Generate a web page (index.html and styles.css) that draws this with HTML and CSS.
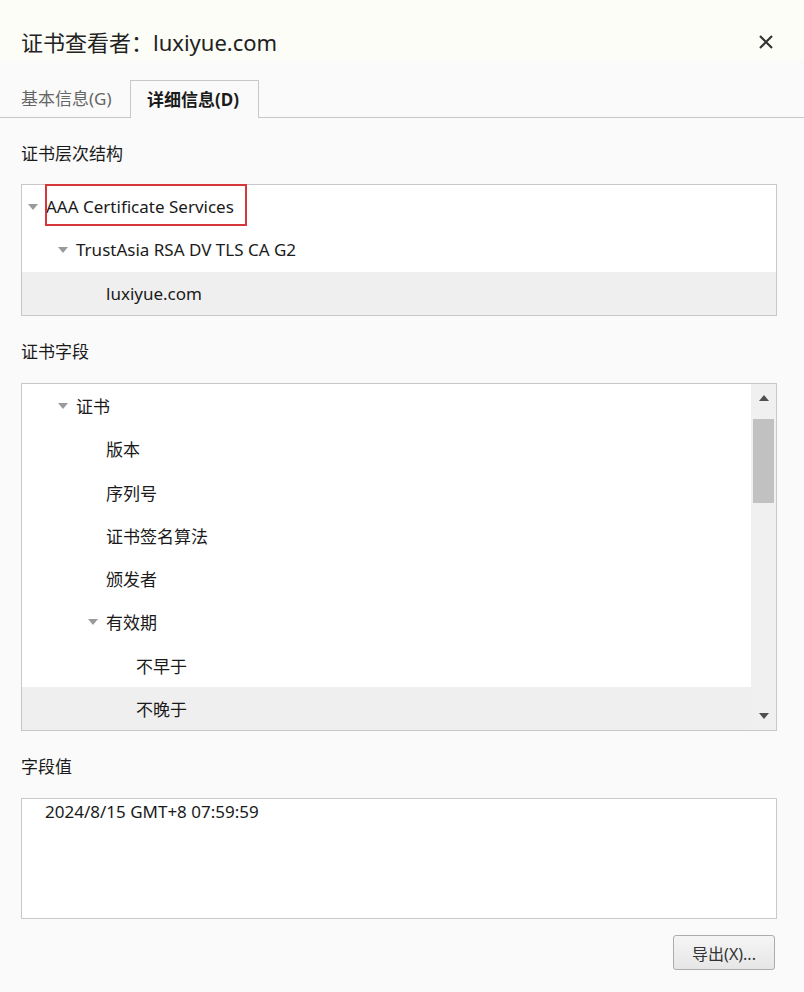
FILE: index.html
```html
<!DOCTYPE html>
<html lang="zh-CN">
<head>
<meta charset="utf-8">
<title>证书查看者</title>
<link rel="stylesheet" href="styles.css">
</head>
<body>
<div class="dialog">
  <header class="header">
    <h1 class="title">证书查看者：luxiyue.com</h1>
    <button class="close" aria-label="关闭">
      <svg width="16" height="16" viewBox="0 0 16 16"><path d="M2 2 L14 14 M14 2 L2 14" stroke="#333" stroke-width="2.2" fill="none"/></svg>
    </button>
  </header>

  <nav class="tabs">
    <div class="tab">基本信息(G)</div>
    <div class="tab active">详细信息(D)</div>
  </nav>

  <div class="content">
    <div class="label">证书层次结构</div>
    <div class="box tree-box">
      <div class="row lvl0"><span class="tri"></span><span class="mark">AAA Certificate Services</span></div>
      <div class="row lvl1"><span class="tri"></span><span>TrustAsia RSA DV TLS CA G2</span></div>
      <div class="row lvl2 selected"><span>luxiyue.com</span></div>
    </div>

    <div class="label label-fields">证书字段</div>
    <div class="box fields-box">
      <div class="fields">
        <div class="frow lvl1"><span class="tri"></span><span>证书</span></div>
        <div class="frow lvl2"><span>版本</span></div>
        <div class="frow lvl2"><span>序列号</span></div>
        <div class="frow lvl2"><span>证书签名算法</span></div>
        <div class="frow lvl2"><span>颁发者</span></div>
        <div class="frow lvl2 has-tri"><span class="tri"></span><span>有效期</span></div>
        <div class="frow lvl3"><span>不早于</span></div>
        <div class="frow lvl3 selected"><span>不晚于</span></div>
      </div>
      <div class="scrollbar">
        <div class="sb-btn"><span class="arrow-up"></span></div>
        <div class="sb-track"><div class="sb-thumb"></div></div>
        <div class="sb-btn"><span class="arrow-down"></span></div>
      </div>
    </div>

    <div class="label label-value">字段值</div>
    <div class="box value-box">2024/8/15 GMT+8 07:59:59</div>

    <div class="actions">
      <button class="btn">导出(X)...</button>
    </div>
  </div>
</div>
</body>
</html>
```

FILE: styles.css
```css
* { box-sizing: border-box; }
html, body { margin: 0; padding: 0; }
body {
  background: #fafafa;
  font-family: "Noto Sans", "Noto Sans CJK SC", sans-serif;
  color: #1a1a1a;
  width: 804px;
  height: 992px;
  overflow: hidden;
}
.dialog { width: 804px; }

.header {
  height: 60px;
  background: #fcfdf6;
  display: flex;
  align-items: flex-start;
  justify-content: space-between;
  padding: 27px 30px 0 21px;
}
.title {
  margin: 0;
  font-weight: 400;
  font-size: 22px;
  line-height: 30px;
  color: #222;
}
.close {
  border: 0;
  background: transparent;
  padding: 0;
  margin-top: 7px;
  width: 16px;
  height: 16px;
  display: block;
}
.close svg { display: block; }

.tabs {
  margin-top: 20px;
  height: 38px;
  display: flex;
  align-items: stretch;
  border-bottom: 1px solid #c8c8c8;
  padding-left: 21px;
}
.tab {
  font-size: 17px;
  line-height: 37px;
  color: #666;
  width: 109px;
}
.tab.active {
  color: #1a1a1a;
  font-weight: 700;
  border: 1px solid #c8c8c8;
  border-bottom: 0;
  background: #fafafa;
  margin-bottom: -1px;
  padding: 0 0 0 16px;
  width: 129px;
  line-height: 38px;
}

.content { padding: 0 27px 0 21px; }

.label {
  font-size: 17px;
  line-height: 28px;
  margin-top: 22px;
  margin-bottom: 16px;
}
.label-fields { margin-bottom: 17px; }
.label-value { margin-top: 22px; margin-bottom: 17px; }

.box {
  background: #fff;
  border: 1px solid #c8c8c8;
}

.tree-box { height: 132px; }
.row, .frow {
  display: flex;
  align-items: center;
  font-size: 17px;
  white-space: nowrap;
}
.row { height: 43.33px; }
.frow { height: 43.25px; }
.selected { background: #efefef; }

.lvl0 { padding-left: 6px; }
.lvl1 { padding-left: 36px; }
.lvl2 { padding-left: 84px; }
.lvl2.has-tri { padding-left: 66px; }
.lvl3 { padding-left: 114px; }

.tri {
  width: 0;
  height: 0;
  border-left: 5px solid transparent;
  border-right: 5px solid transparent;
  border-top: 6px solid #9a9a9a;
  margin-right: 8px;
  margin-top: 1px;
}

.mark { position: relative; }
.mark::after {
  content: "";
  position: absolute;
  left: -1px;
  top: -11px;
  width: 198px;
  height: 38px;
  border: 2px solid #d6373b;
}

.fields-box {
  height: 348px;
  display: flex;
}
.fields { flex: 1; }
.scrollbar {
  width: 25px;
  background: #f0f0f0;
  display: flex;
  flex-direction: column;
}
.sb-btn {
  height: 28px;
  display: flex;
  align-items: center;
  justify-content: center;
}
.sb-track { flex: 1; padding: 7px 2px 0 2px; }
.sb-thumb { height: 84px; background: #c1c1c1; }
.arrow-up {
  width: 0; height: 0;
  border-left: 5px solid transparent;
  border-right: 5px solid transparent;
  border-bottom: 6px solid #505050;
}
.arrow-down {
  width: 0; height: 0;
  border-left: 5px solid transparent;
  border-right: 5px solid transparent;
  border-top: 6px solid #505050;
}

.value-box {
  height: 121px;
  font-size: 17px;
  line-height: 26px;
  padding-left: 23px;
}

.actions {
  display: flex;
  justify-content: flex-end;
  margin-top: 16px;
  padding-right: 2px;
}
.btn {
  width: 102px;
  height: 35px;
  border: 1px solid #acacac;
  border-radius: 3px;
  background: linear-gradient(#f5f5f5, #e6e6e6);
  font-family: "Noto Sans", "Noto Sans CJK SC", sans-serif;
  font-size: 16px;
  color: #333;
  padding: 0;
}
```
